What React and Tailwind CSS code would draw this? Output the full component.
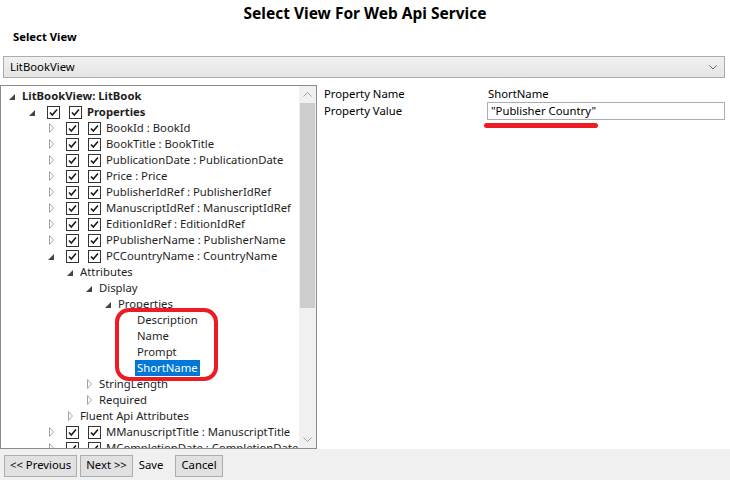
import React from "react";

const rows = [
  { level: 0, exp: "open", text: "LitBookView: LitBook", bold: true },
  { level: 1, exp: "open", cb: true, text: "Properties", bold: true },
  { level: 2, exp: "closed", cb: true, text: "BookId : BookId" },
  { level: 2, exp: "closed", cb: true, text: "BookTitle : BookTitle" },
  { level: 2, exp: "closed", cb: true, text: "PublicationDate : PublicationDate" },
  { level: 2, exp: "closed", cb: true, text: "Price : Price" },
  { level: 2, exp: "closed", cb: true, text: "PublisherIdRef : PublisherIdRef" },
  { level: 2, exp: "closed", cb: true, text: "ManuscriptIdRef : ManuscriptIdRef" },
  { level: 2, exp: "closed", cb: true, text: "EditionIdRef : EditionIdRef" },
  { level: 2, exp: "closed", cb: true, text: "PPublisherName : PublisherName" },
  { level: 2, exp: "open", cb: true, text: "PCCountryName : CountryName" },
  { level: 3, exp: "open", text: "Attributes" },
  { level: 4, exp: "open", text: "Display" },
  { level: 5, exp: "open", text: "Properties" },
  { level: 6, text: "Description" },
  { level: 6, text: "Name" },
  { level: 6, text: "Prompt" },
  { level: 6, text: "ShortName", selected: true },
  { level: 4, exp: "closed", text: "StringLength" },
  { level: 4, exp: "closed", text: "Required" },
  { level: 3, exp: "closed", text: "Fluent Api Attributes" },
  { level: 2, exp: "closed", cb: true, text: "MManuscriptTitle : ManuscriptTitle" },
  { level: 2, exp: "closed", cb: true, text: "MCompletionDate : CompletionDate" },
];

const Expander = ({ type }) => {
  if (type === "open") {
    return (
      <svg width="13" height="16" viewBox="0 0 13 16" className="shrink-0">
        <polygon points="6,6 6,12 0,12" fill="#444" />
      </svg>
    );
  }
  if (type === "closed") {
    return (
      <svg width="13" height="16" viewBox="0 0 13 16" className="shrink-0">
        <polygon points="1.5,3.5 5.5,8 1.5,12.5" fill="none" stroke="#a6a6a6" strokeWidth="1" />
      </svg>
    );
  }
  return <span className="w-[13px] shrink-0" />;
};

const Check = () => (
  <svg width="13" height="13" viewBox="0 0 13 13" className="shrink-0">
    <rect x="0.5" y="0.5" width="12" height="12" fill="#fff" stroke="#333" />
    <path d="M3 6.5 L5.3 9 L10 3.5" fill="none" stroke="#1a1a1a" strokeWidth="1.6" />
  </svg>
);

const TreeRow = ({ row }) => {
  const start = row.level === 0 ? 8 : 28 + 19 * (row.level - 1);
  return (
    <div className="flex h-[16px] items-center whitespace-nowrap" style={{ paddingLeft: start }}>
      <Expander type={row.exp} />
      {row.cb && (
        <div className="ml-[5px] flex items-center gap-[9px]">
          <Check />
          <Check />
        </div>
      )}
      <span
        className={`${row.cb ? "ml-[3px]" : "ml-[-2px]"} px-[2px] leading-[16px] ${
          row.bold ? "font-bold" : ""
        } ${row.selected ? "ml-[-1px] bg-[#0078d7] text-white" : "text-[#1e1e1e]"}`}
      >
        {row.text}
      </span>
    </div>
  );
};

export default function App() {
  return (
    <div className="flex h-[480px] w-[730px] flex-col overflow-hidden bg-white font-['Noto_Sans',sans-serif] text-[11.3px] text-black">
      <div className="flex h-[28px] items-center justify-center text-[15.5px] font-bold">
        Select View For Web Api Service
      </div>
      <div className="flex h-[18px] items-center pl-[13px] font-bold">Select View</div>
      <div className="mt-[10px] ml-[3px] flex h-[22px] w-[722px] items-center justify-between border border-[#acacac] bg-gradient-to-b from-[#f0f0f0] to-[#e5e5e5] pl-[6px] pr-[7px]">
        <span>LitBookView</span>
        <svg width="8" height="5" viewBox="0 0 8 5">
          <path d="M0.5 0.5 L4 4 L7.5 0.5" fill="none" stroke="#666" strokeWidth="1" />
        </svg>
      </div>

      <div className="mt-[7px] flex h-[364px]">
        <div className="relative flex h-[364px] w-[317px] border border-[#8c8c8c]">
          <div className="flex-1 overflow-hidden pt-[2px]">
            {rows.map((r, i) => (
              <TreeRow key={i} row={r} />
            ))}
          </div>
          <div className="flex w-[17px] flex-col bg-[#f0f0f0]">
            <div className="flex h-[17px] items-center justify-center">
              <svg width="9" height="5" viewBox="0 0 9 5">
                <path d="M0.5 4.5 L4.5 0.5 L8.5 4.5" fill="none" stroke="#a0a0a0" />
              </svg>
            </div>
            <div className="mx-[1px] h-[205px] bg-[#cdcdcd]" />
            <div className="flex-1" />
            <div className="flex h-[17px] items-center justify-center">
              <svg width="9" height="5" viewBox="0 0 9 5">
                <path d="M0.5 0.5 L4.5 4.5 L8.5 0.5" fill="none" stroke="#a0a0a0" />
              </svg>
            </div>
          </div>
          <div className="absolute left-[114px] top-[222px] h-[73px] w-[103px] rounded-[14px] border-[4px] border-[#ed1c24]" />
        </div>

        <div className="flex-1 pl-[7px] pt-[1px]">
          <div className="grid grid-cols-[163px_1fr] pr-[5px]">
            <div className="flex h-[16px] items-center">Property Name</div>
            <div className="flex h-[16px] items-center pl-[1px]">ShortName</div>
            <div className="flex h-[18px] items-center">Property Value</div>
            <div className="flex h-[18px] items-center border border-[#abadb3] pl-[3px]">
              "Publisher Country"
            </div>
          </div>
          <div className="ml-[160px] mt-[3px] h-[5px] w-[114px] rounded-full bg-[#ed1c24]" />
        </div>
      </div>

      <div className="flex flex-1 items-center gap-[3px] bg-[#f0f0f0] pl-[4px] pt-[2px]">
        <button className="h-[22px] border border-[#adadad] bg-[#e1e1e1] px-[5px]">&lt;&lt; Previous</button>
        <button className="h-[22px] border border-[#adadad] bg-[#e1e1e1] px-[5px]">Next &gt;&gt;</button>
        <span className="px-[3px]">Save</span>
        <button className="ml-[6px] h-[22px] border border-[#adadad] bg-[#e1e1e1] px-[5px]">Cancel</button>
      </div>
    </div>
  );
}
